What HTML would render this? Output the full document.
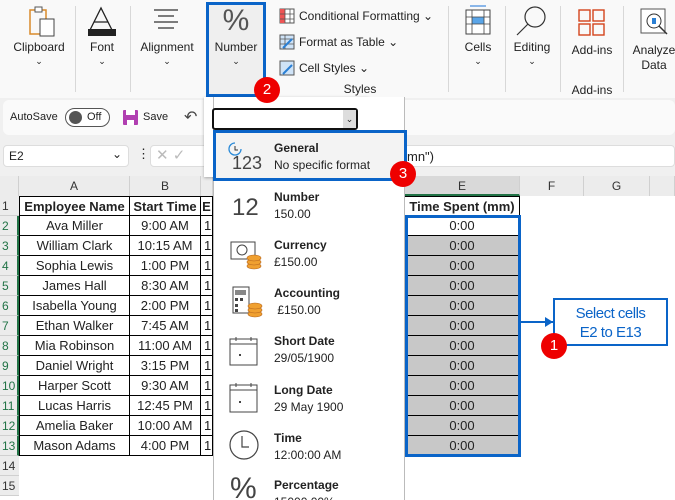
<!DOCTYPE html><html><head><style>
*{box-sizing:border-box}html,body{margin:0;width:675px;height:500px;overflow:hidden}body{background:#f0f0f0;font-family:"Liberation Sans",sans-serif;position:relative;font-size:12px;color:#222}
.a{position:absolute}
.rb{left:0;top:0;width:675px;height:98px;background:#f9f9f9}
.lbl{position:absolute;font-size:12px;color:#222;text-align:center}
.sep{position:absolute;top:6px;width:1px;height:86px;background:#d8d8d8}
.chev{font-size:9px}
.cell{position:absolute;height:20px;border-right:1px solid #000;border-bottom:1px solid #000;text-align:center;line-height:19px;font-size:13px;background:#fff}
.rh{position:absolute;left:0;width:19px;height:20px;background:#ececec;border-bottom:1px solid #d0d0d0;font-size:12px;line-height:20px;padding-left:2px;color:#333}
.ch{position:absolute;top:176px;height:20px;background:#ececec;border-right:1px solid #d0d0d0;text-align:center;line-height:20px;font-size:12px;color:#333}
.it{position:absolute;left:274px;font-size:12px;line-height:17px}
.it b{display:block;font-size:12px}
.badge{position:absolute;width:26px;height:26px;border-radius:50%;background:#e00;color:#fff;text-align:center;line-height:26px;font-size:15px}
</style></head><body>
<div class="a rb"></div>
<svg class="a" style="left:28px;top:6px" width="30" height="32"><rect x="2" y="4" width="16" height="24" fill="none" stroke="#d98b2b" stroke-width="1.5"/><rect x="7" y="1" width="7" height="5" fill="#fff" stroke="#555"/><rect x="12" y="13" width="14" height="17" fill="#fff" stroke="#444"/></svg>
<div class="lbl" style="left:8px;top:40px;width:62px">Clipboard</div><div class="lbl chev" style="left:8px;top:56px;width:62px">⌄</div>
<div class="sep" style="left:75px"></div>
<svg class="a" style="left:86px;top:6px" width="32" height="30"><path d="M4 24 L15 2 L26 24 M8 16 H22" stroke="#222" fill="none" stroke-width="1.3"/><rect x="2" y="23" width="28" height="7" fill="#222"/></svg>
<div class="lbl" style="left:80px;top:40px;width:44px">Font</div><div class="lbl chev" style="left:80px;top:56px;width:44px">⌄</div>
<div class="sep" style="left:130px"></div>
<svg class="a" style="left:152px;top:8px" width="28" height="24"><path d="M2 2H26M6 8H22M2 14H26M6 20H22" stroke="#333" stroke-width="1.2"/></svg>
<div class="lbl" style="left:135px;top:40px;width:64px">Alignment</div><div class="lbl chev" style="left:135px;top:56px;width:64px">⌄</div>
<div class="a" style="left:206px;top:2px;width:60px;height:95px;border:3px solid #0a64c8;background:#efefef"></div>
<div class="lbl" style="left:206px;top:4px;width:60px;font-size:30px;color:#555">%</div>
<div class="lbl" style="left:206px;top:40px;width:60px">Number</div><div class="lbl chev" style="left:206px;top:56px;width:60px">⌄</div>
<svg class="a" style="left:279px;top:8px" width="16" height="16"><rect x="1" y="1" width="14" height="14" fill="#fff" stroke="#555"/><rect x="1" y="1" width="5" height="14" fill="#e55"/><path d="M1 6H15M1 11H15M6 1V15M11 1V15" stroke="#555" stroke-width=".8"/></svg>
<div class="a" style="left:299px;top:9px;font-size:12px">Conditional Formatting ⌄</div>
<svg class="a" style="left:279px;top:34px" width="16" height="16"><rect x="1" y="1" width="14" height="14" fill="#cfe3f7" stroke="#555"/><path d="M1 5H15M1 10H15M6 1V15" stroke="#555" stroke-width=".8"/><path d="M4 14L13 5" stroke="#2a7fd4" stroke-width="2"/></svg>
<div class="a" style="left:299px;top:35px;font-size:12px">Format as Table ⌄</div>
<svg class="a" style="left:279px;top:60px" width="16" height="16"><rect x="1" y="1" width="14" height="14" fill="#cfe3f7" stroke="#555"/><path d="M4 14L13 5" stroke="#2a7fd4" stroke-width="2"/></svg>
<div class="a" style="left:299px;top:61px;font-size:12px">Cell Styles ⌄</div>
<div class="lbl" style="left:335px;top:82px;width:50px">Styles</div>
<div class="sep" style="left:448px"></div>
<svg class="a" style="left:464px;top:5px" width="28" height="30"><path d="M6 1H22" stroke="#1a73d9"/><rect x="2" y="5" width="24" height="24" fill="#fff" stroke="#444"/><rect x="8" y="12" width="12" height="7" fill="#5aa5e8"/><path d="M2 12H26M2 19H26M8 5V29M20 5V29" stroke="#444" stroke-width=".8"/></svg>
<div class="lbl" style="left:455px;top:40px;width:46px">Cells</div><div class="lbl chev" style="left:455px;top:56px;width:46px">⌄</div>
<div class="sep" style="left:505px"></div>
<svg class="a" style="left:515px;top:5px" width="34" height="32"><circle cx="20" cy="12" r="10" fill="none" stroke="#333" stroke-width="1.2"/><path d="M13 19L2 30" stroke="#333" stroke-width="1.2"/></svg>
<div class="lbl" style="left:508px;top:40px;width:48px">Editing</div><div class="lbl chev" style="left:508px;top:56px;width:48px">⌄</div>
<div class="sep" style="left:560px"></div>
<svg class="a" style="left:578px;top:9px" width="28" height="28"><g fill="none" stroke="#d4441c" stroke-width="1.4"><rect x="1" y="1" width="11" height="11"/><rect x="15" y="1" width="11" height="11"/><rect x="1" y="15" width="11" height="11"/><rect x="15" y="15" width="11" height="11"/></g></svg>
<div class="lbl" style="left:565px;top:43px;width:54px">Add-ins</div>
<div class="lbl" style="left:565px;top:83px;width:54px">Add-ins</div>
<div class="sep" style="left:623px"></div>
<svg class="a" style="left:640px;top:6px" width="30" height="30"><rect x="1" y="3" width="24" height="24" fill="#fff" stroke="#555"/><circle cx="14" cy="15" r="7" fill="none" stroke="#333"/><rect x="12" y="12" width="4" height="6" fill="#2a7fd4"/><path d="M19 20L27 28" stroke="#333" stroke-width="1.5"/></svg>
<div class="lbl" style="left:628px;top:43px;width:52px;line-height:15px">Analyze<br>Data</div>
<div class="a" style="left:3px;top:100px;width:672px;height:35px;background:#fafafa;border-radius:6px"></div>
<div class="a" style="left:10px;top:111px;font-size:11px">AutoSave</div>
<div class="a" style="left:65px;top:108px;width:45px;height:19px;border:1px solid #555;border-radius:10px;background:#fff"></div>
<div class="a" style="left:69px;top:111px;width:13px;height:13px;border-radius:50%;background:#555"></div>
<div class="a" style="left:87px;top:111px;font-size:11px">Off</div>
<div class="a" style="left:123px;top:110px;width:15px;height:15px;background:#b13fb1;border-radius:1px"></div><div class="a" style="left:126px;top:110px;width:9px;height:5px;background:#fff"></div><div class="a" style="left:127px;top:120px;width:7px;height:5px;background:#fff"></div>
<div class="a" style="left:143px;top:111px;font-size:11px">Save</div>
<div class="a" style="left:184px;top:107px;font-size:16px;color:#444">↶</div>
<div class="a" style="left:3px;top:145px;width:126px;height:22px;background:#fff;border:1px solid #ddd;border-radius:4px"></div>
<div class="a" style="left:9px;top:149px;font-size:12px">E2</div><div class="a" style="left:112px;top:147px;font-size:12px">⌄</div>
<div class="a" style="left:137px;top:146px;font-size:13px">⋮</div>
<div class="a" style="left:150px;top:145px;width:525px;height:22px;background:#fff;border:1px solid #ddd;border-radius:4px"></div>
<div class="a" style="left:156px;top:146px;font-size:15px;color:#bbb">✕ ✓</div>
<div class="a" style="left:407px;top:149px;font-size:13px">mn")</div>
<div class="a" style="left:0;top:176px;width:675px;height:324px;background:#fff"></div>
<div class="ch" style="left:0;width:19px"></div>
<div class="ch" style="left:19px;width:111px">A</div>
<div class="ch" style="left:130px;width:71px">B</div>
<div class="ch" style="left:201px;width:12px"></div>
<div class="ch" style="left:405px;width:115px;border-bottom:2px solid #217346;background:#d9d9d9">E</div>
<div class="ch" style="left:520px;width:64px">F</div>
<div class="ch" style="left:584px;width:66px">G</div>
<div class="ch" style="left:650px;width:25px"></div>
<div id="g"></div>
<script>
var n=["Ava Miller","William Clark","Sophia Lewis","James Hall","Isabella Young","Ethan Walker","Mia Robinson","Daniel Wright","Harper Scott","Lucas Harris","Amelia Baker","Mason Adams"];
var t=["9:00 AM","10:15 AM","1:00 PM","8:30 AM","2:00 PM","7:45 AM","11:00 AM","3:15 PM","9:30 AM","12:45 PM","10:00 AM","4:00 PM"];
var h="";
for(var r=1;r<=15;r++){var y=196+(r-1)*20;
h+='<div class="rh" style="top:'+y+'px;'+(r>=2&&r<=13?'border-right:2px solid #217346;color:#217346':'')+'">'+r+'</div>';
if(r==1){h+='<div class="cell" style="left:19px;top:196px;width:111px;font-weight:bold;border-top:1px solid #000;border-left:1px solid #000">Employee Name</div><div class="cell" style="left:130px;top:196px;width:71px;font-weight:bold;border-top:1px solid #000">Start Time</div><div class="cell" style="left:201px;top:196px;width:12px;font-weight:bold;border-top:1px solid #000">E</div><div class="cell" style="left:405px;top:196px;width:115px;font-weight:bold;border-top:1px solid #000">Time Spent (mm)</div>';}
else if(r<=13){h+='<div class="cell" style="left:19px;top:'+y+'px;width:111px;border-left:1px solid #000">'+n[r-2]+'</div><div class="cell" style="left:130px;top:'+y+'px;width:71px">'+t[r-2]+'</div><div class="cell" style="left:201px;top:'+y+'px;width:12px;text-align:left;padding-left:3px">1</div><div class="cell" style="left:405px;top:'+y+'px;width:115px;background:'+(r==2?'#fff':'#c8c8c8')+'">0:00</div>';}
}
document.getElementById("g").innerHTML=h;
</script>
<div class="a" style="left:405px;top:215px;width:116px;height:242px;border:3px solid #0a64c8"></div>
<div class="a" style="left:521px;top:321px;width:32px;height:2px;background:#0a64c8"></div>
<div class="a" style="left:545px;top:317px;width:0;height:0;border-left:8px solid #0a64c8;border-top:5px solid transparent;border-bottom:5px solid transparent"></div>
<div class="a" style="left:553px;top:298px;width:115px;height:48px;border:2px solid #0a64c8;background:#fff;color:#0a64c8;font-size:15px;text-align:center;line-height:19px;padding-top:4px;letter-spacing:-.5px">Select cells<br>E2 to E13</div>
<div class="badge" style="left:541px;top:333px">1</div>
<div class="a" style="left:204px;top:97px;width:165px;height:80px;background:#fff;box-shadow:0 1px 3px rgba(0,0,0,.3)"></div>
<div class="a" style="left:213px;top:97px;width:192px;height:403px;background:#fff;border-left:1px solid #bbb;border-right:1px solid #bbb"></div>
<div class="a" style="left:212px;top:108px;width:146px;height:22px;border:2px solid #111;border-radius:3px;background:#fff"></div>
<div class="a" style="left:343px;top:110px;width:13px;height:18px;background:#ddd;font-size:9px;text-align:center;line-height:18px">⌄</div>
<div class="a" style="left:213px;top:130px;width:194px;height:51px;border:3px solid #0a64c8;background:#f3f3f3"></div>
<svg class="a" style="left:228px;top:142px" width="14" height="14"><path d="M7 1A6 6 0 1 0 13 7" fill="none" stroke="#2a8ad8" stroke-width="1.3"/><path d="M7 4V8H10" stroke="#333" fill="none"/></svg>
<div class="a" style="left:232px;top:153px;font-size:18px;color:#444">123</div>
<div class="it" style="top:140px"><b>General</b>No specific format</div>
<div class="badge" style="left:390px;top:161px">3</div>
<div class="a" style="left:232px;top:194px;font-size:24px;color:#444">12</div>
<div class="it" style="top:189px"><b>Number</b>150.00</div>
<svg class="a" style="left:229px;top:240px" width="34" height="32"><rect x="2" y="2" width="24" height="17" fill="#fff" stroke="#444"/><circle cx="13" cy="10" r="5" fill="none" stroke="#444"/><g fill="#f0a030" stroke="#b5651d" stroke-width=".6"><ellipse cx="25" cy="26" rx="7" ry="3"/><ellipse cx="25" cy="22" rx="7" ry="3"/><ellipse cx="25" cy="18" rx="7" ry="3"/></g></svg>
<div class="it" style="top:237px"><b>Currency</b>£150.00</div>
<svg class="a" style="left:230px;top:286px" width="34" height="34"><rect x="3" y="1" width="16" height="26" fill="#fff" stroke="#444"/><rect x="5" y="4" width="11" height="5" fill="#888"/><g fill="#444"><rect x="5" y="12" width="3" height="3"/><rect x="10" y="12" width="3" height="3"/><rect x="5" y="18" width="3" height="3"/><rect x="5" y="23" width="3" height="3"/></g><g fill="#f0a030" stroke="#b5651d" stroke-width=".6"><ellipse cx="25" cy="28" rx="7" ry="3"/><ellipse cx="25" cy="24" rx="7" ry="3"/><ellipse cx="25" cy="20" rx="7" ry="3"/></g></svg>
<div class="it" style="top:285px"><b>Accounting</b>&nbsp;£150.00</div>
<svg class="a" style="left:229px;top:336px" width="30" height="30"><rect x="1" y="3" width="27" height="26" fill="#fff" stroke="#444"/><path d="M1 8H28M7 1V5M22 1V5" stroke="#444"/><rect x="10" y="18" width="2" height="2" fill="#444"/></svg>
<div class="it" style="top:333px"><b>Short Date</b>29/05/1900</div>
<svg class="a" style="left:229px;top:380px" width="30" height="34"><rect x="1" y="5" width="27" height="27" fill="#fff" stroke="#444"/><path d="M1 10H28M7 3V7M22 3V7" stroke="#444"/><rect x="10" y="21" width="2" height="2" fill="#444"/></svg>
<div class="it" style="top:382px"><b>Long Date</b>29 May 1900</div>
<svg class="a" style="left:229px;top:430px" width="32" height="32"><circle cx="15" cy="15" r="14" fill="none" stroke="#444" stroke-width="1.2"/><path d="M13 6V17H20" fill="none" stroke="#444" stroke-width="1.2"/></svg>
<div class="it" style="top:430px"><b>Time</b>12:00:00 AM</div>
<div class="a" style="left:230px;top:472px;font-size:30px;color:#444">%</div>
<div class="it" style="top:477px"><b>Percentage</b>15000.00%</div>
<div class="badge" style="left:254px;top:77px">2</div>
</body></html>
